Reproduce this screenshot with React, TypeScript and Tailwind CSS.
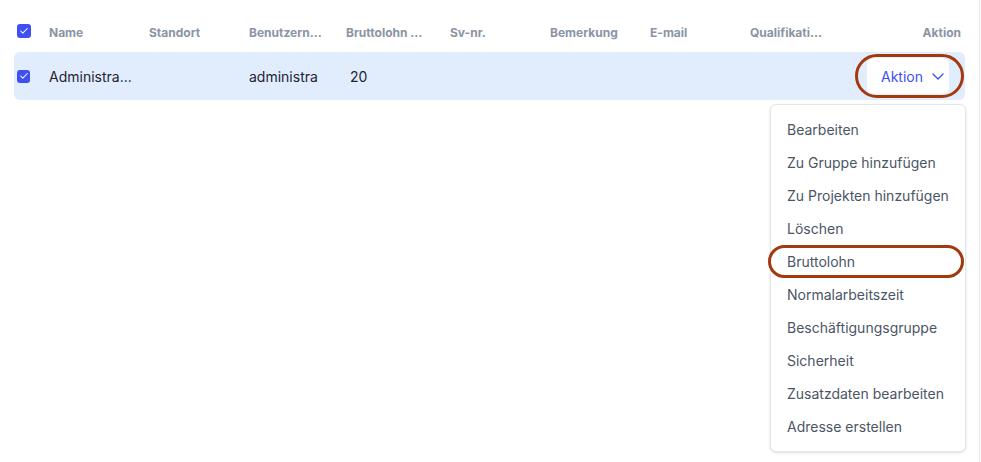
import { Check } from "lucide-react";

const COLS: { label: string; w: string }[] = [
  { label: "Name",          w: "w-[100px]" },
  { label: "Standort",      w: "w-[100px]" },
  { label: "Benutzern...",  w: "w-[97px]"  },
  { label: "Bruttolohn ...", w: "w-[104px]" },
  { label: "Sv-nr.",        w: "w-[100px]" },
  { label: "Bemerkung",     w: "w-[100px]" },
  { label: "E-mail",        w: "w-[100px]" },
  { label: "Qualifikati...", w: "w-[100px]" },
];

const MENU = [
  "Bearbeiten",
  "Zu Gruppe hinzufügen",
  "Zu Projekten hinzufügen",
  "Löschen",
  "Bruttolohn",
  "Normalarbeitszeit",
  "Beschäftigungsgruppe",
  "Sicherheit",
  "Zusatzdaten bearbeiten",
  "Adresse erstellen",
];

function Box({ size }: { size: string }) {
  return (
    <div className={`${size} rounded-[3px] bg-[#3f4ff2] flex items-center justify-center`}>
      <Check size={10} strokeWidth={2.5} className="text-white" />
    </div>
  );
}

export default function App() {
  return (
    <div
      className="relative w-[980px] h-[462px] bg-white border-r border-[#e5e7eb] overflow-hidden"
      style={{ fontFamily: "Inter, 'Noto Sans', sans-serif" }}
    >
      <div className="px-[14px] pt-[24px]">
        {/* Header */}
        <div className="flex items-center h-[14px] mb-[14px]">
          <div className="w-[35px] pl-[3px]">
            <Box size="w-[14px] h-[14px]" />
          </div>
          {COLS.map((c) => (
            <div key={c.label} className={`${c.w} pt-[3px] text-[12px] font-bold text-[#8a94a4] whitespace-nowrap`}>
              {c.label}
            </div>
          ))}
          <div className="flex-1 pt-[3px] text-right pr-[4px] text-[12px] font-bold text-[#8a94a4]">Aktion</div>
        </div>

        {/* Row */}
        <div className="flex items-center h-[48px] bg-[#e1ecfd] rounded-[6px]">
          <div className="w-[35px] pl-[3px]">
            <Box size="w-[13px] h-[13px]" />
          </div>
          <div className="w-[100px] text-[14px] text-[#1f2430]">Administra...</div>
          <div className="w-[100px]" />
          <div className="w-[97px] text-[14px] text-[#1f2430]">administra</div>
          <div className="w-[104px] pl-[4px] text-[14px] text-[#1f2430]">20</div>
          <div className="flex-1" />
          <div className="relative mr-[16px]">
            <button className="flex items-center gap-[9px] h-[36px] pl-[14px] w-[82px] bg-white rounded-[6px] text-[14px] text-[#3f4ff2]">
              Aktion
              <svg width="12" height="7" viewBox="0 0 12 7" fill="none" stroke="currentColor" strokeWidth="1.4" strokeLinecap="round" strokeLinejoin="round">
                <path d="M1 1l5 5 5-5" />
              </svg>
            </button>
            <div className="absolute -left-[12px] -right-[15px] -top-[4px] -bottom-[4px] border-[3px] border-[#a23a0e] rounded-full" />
          </div>
        </div>
      </div>

      {/* Dropdown */}
      <div className="absolute left-[770px] top-[104px] w-[196px] bg-white border border-[#e3e6eb] rounded-[6px] shadow-sm py-[8px]">
        {MENU.map((m) => (
          <div key={m} className="relative h-[33px] flex items-center px-[16px] text-[14px] text-[#4b5565] whitespace-nowrap">
            {m}
            {m === "Bruttolohn" && (
              <div className="absolute -left-[3px] right-[1px] top-0 bottom-0 border-[3px] border-[#a23a0e] rounded-full" />
            )}
          </div>
        ))}
      </div>
    </div>
  );
}
